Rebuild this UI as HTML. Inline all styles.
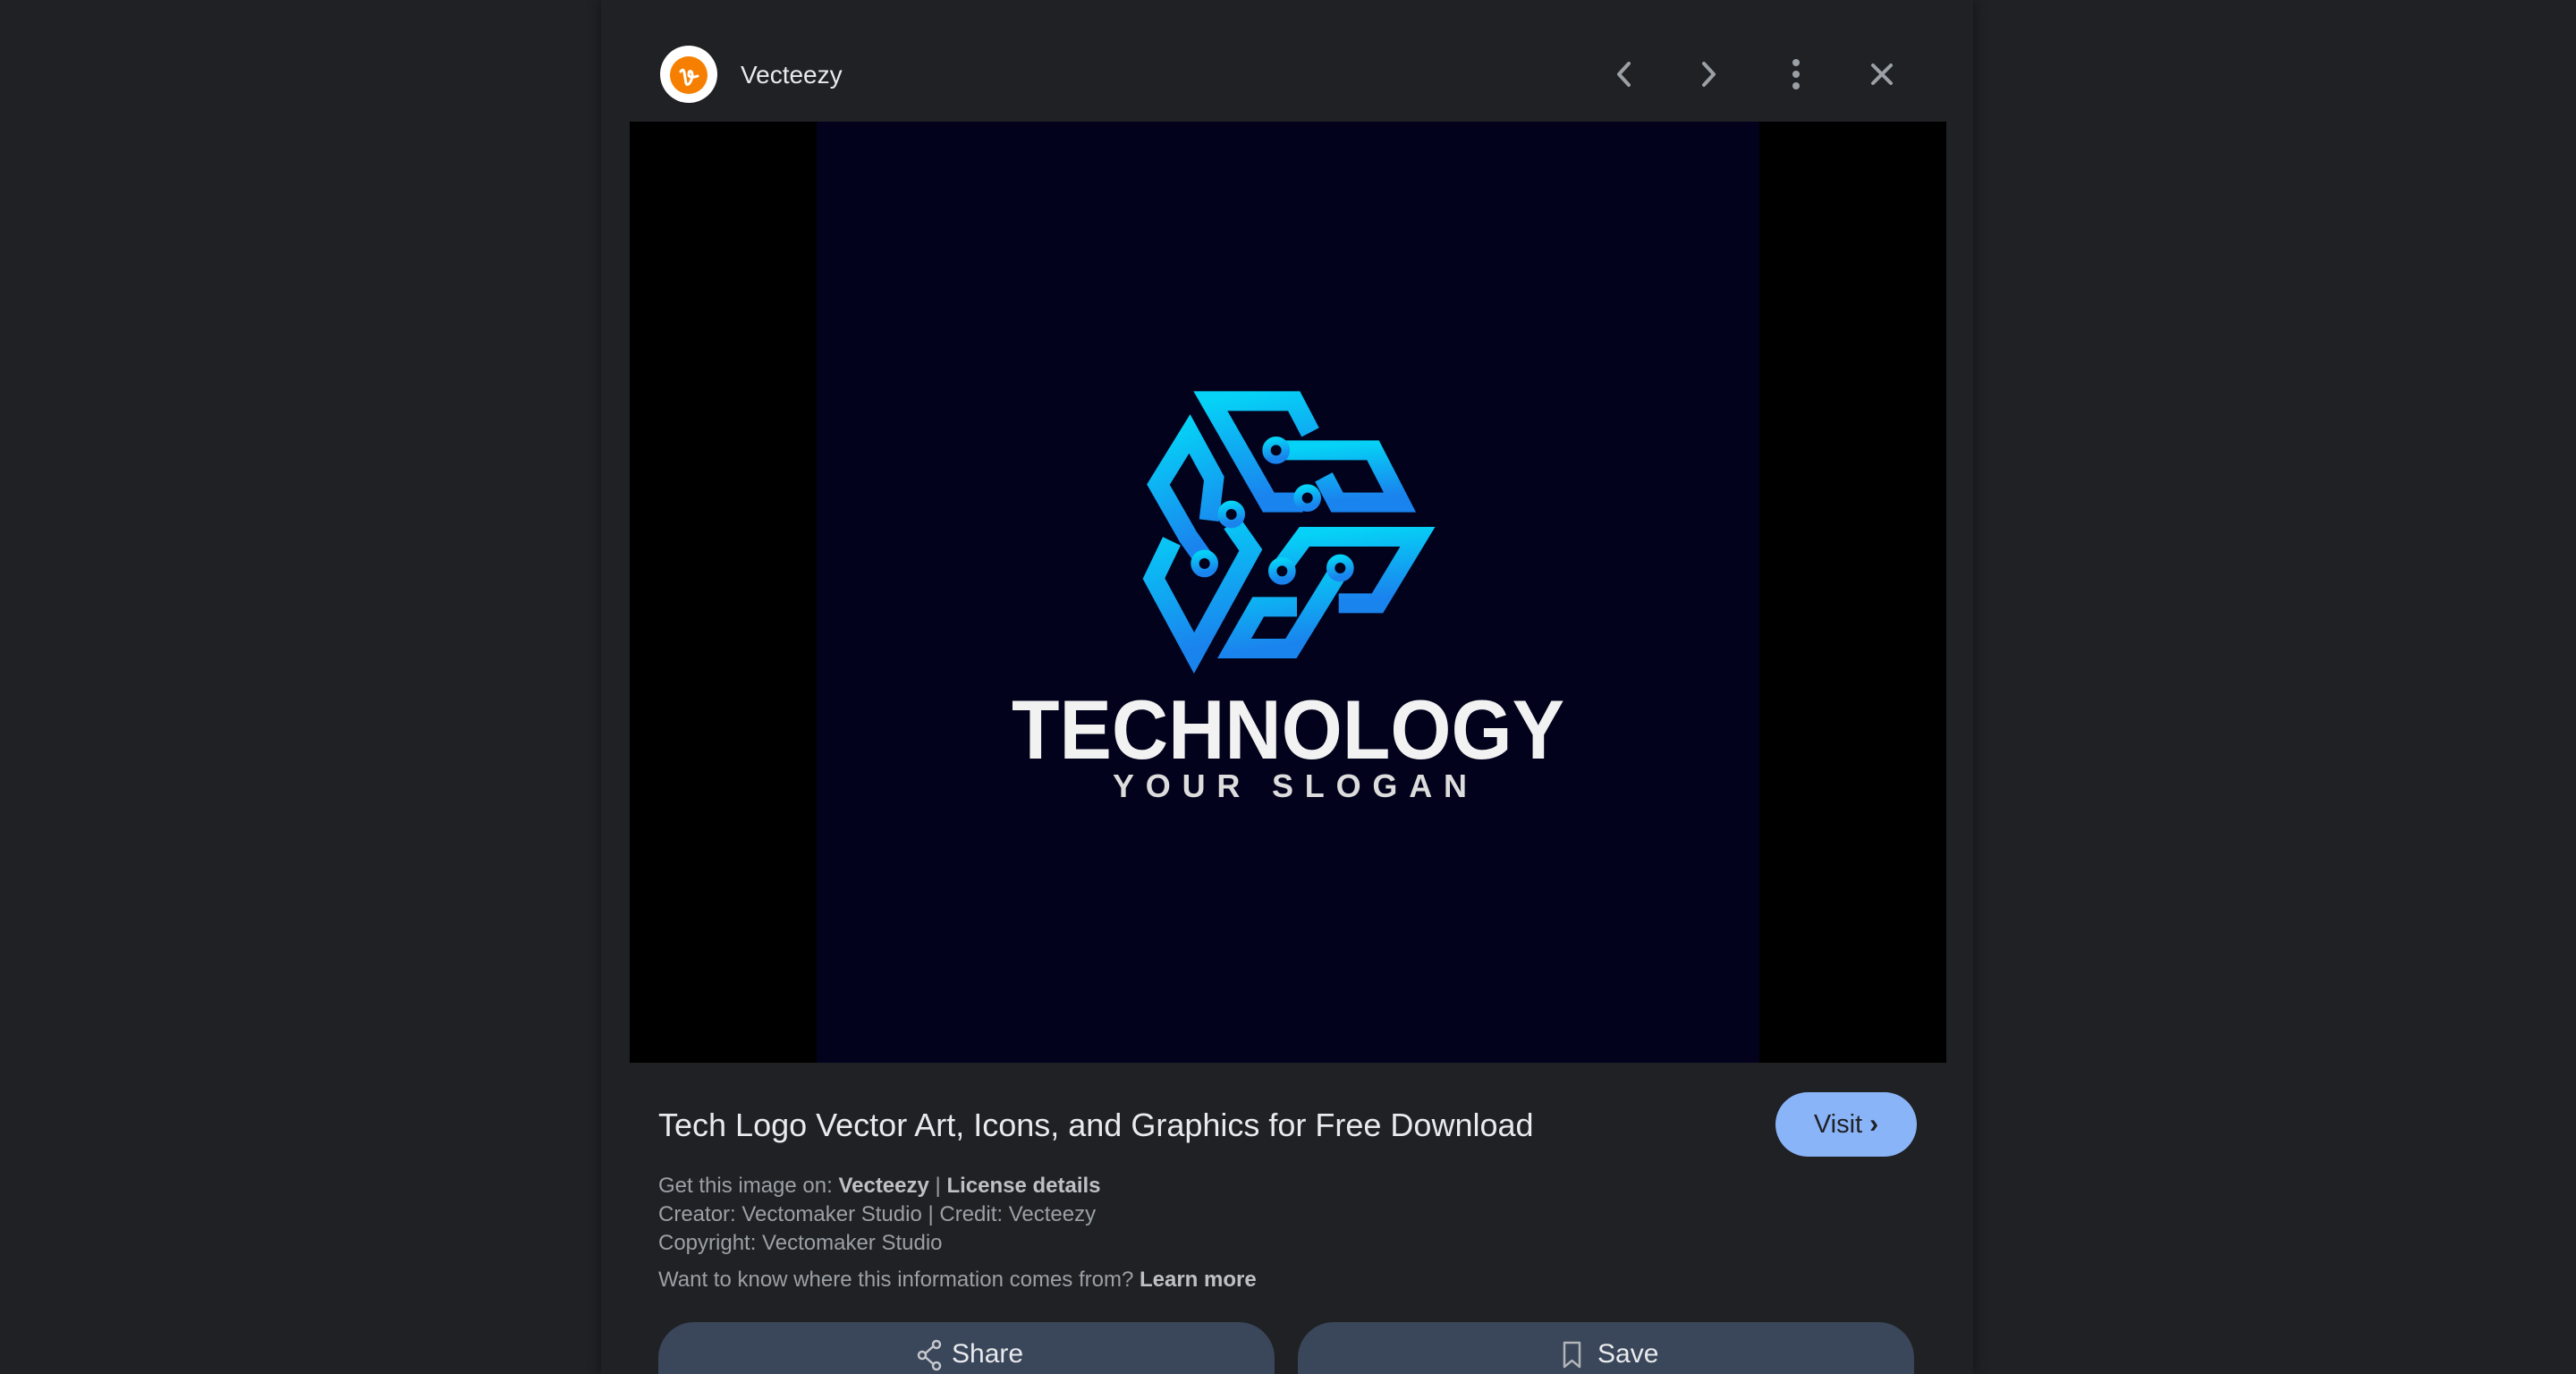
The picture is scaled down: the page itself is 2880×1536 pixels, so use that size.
<!DOCTYPE html>
<html><head><meta charset="utf-8"><style>
html,body{margin:0;padding:0;width:2880px;height:1536px;overflow:hidden;background:#202124;font-family:"Liberation Sans",Arial,sans-serif;position:relative;}
.panel{position:absolute;left:672px;top:0;width:1534px;height:1536px;background:#202124;box-shadow:0 0 14px rgba(0,0,0,.45);}
.abs{position:absolute;}
.img{left:704px;top:136px;width:1472px;height:1052px;background:#000;}
.navy{left:913px;top:136px;width:1054px;height:1052px;background:#02021c;}
.info{left:736px;font-size:24px;color:#9aa0a6;white-space:nowrap;}
.info b{color:#bdc1c6;}
.btn{top:1478px;height:58px;border-radius:40px 40px 0 0;background:#3a4659;}
</style></head><body>
<div class="panel"></div>
<div class="abs" style="left:738px;top:51px;width:64px;height:64px;border-radius:50%;background:#fff;"></div>
<div class="abs" style="left:749px;top:63px;width:42px;height:42px;border-radius:50%;background:#f77f00;"></div>
<svg class="abs" style="left:749px;top:63px" width="42" height="42" viewBox="0 0 42 42"><path d="M12 17 Q15 13 16 18 L18 30 Q19 33 22 30 Q27 22 24 17 Q21 15 21 21 Q22 25 31 22" fill="none" stroke="#fff" stroke-width="3" stroke-linecap="round"/></svg>
<div class="abs" style="left:828px;top:68px;font-size:28px;color:#e8eaed;">Vecteezy</div>
<svg class="abs" style="left:1790px;top:58px" width="340" height="50" viewBox="0 0 340 50">
<g fill="none" stroke="#9aa0a6" stroke-width="4" stroke-linecap="round" stroke-linejoin="round">
<path d="M31 13 L20 25 L31 37"/>
<path d="M115 13 L126 25 L115 37"/>
<path d="M304 15 L324 35 M324 15 L304 35"/>
</g>
<g fill="#9aa0a6"><circle cx="218" cy="12" r="4"/><circle cx="218" cy="25" r="4"/><circle cx="218" cy="38" r="4"/></g>
</svg>
<div class="abs img"></div>
<div class="abs navy"></div>
<svg class="abs" style="left:1270px;top:425px" width="340" height="330" viewBox="0 0 1020 990">
<defs><linearGradient id="g" x1="0" y1="0" x2="0.2" y2="1"><stop offset="0" stop-color="#05d2f6"/><stop offset="1" stop-color="#1a84ee"/></linearGradient></defs>
<g fill="none" stroke="url(#g)" stroke-width="66" stroke-linejoin="miter">
<path d="M585 175 L530 70 L250 70 L445 410 L560 410"/>
<path d="M500 235 L795 235 L885 410 L675 410 L630 325"/>
<path d="M245 470 L262 330 L180 180 L75 350 L175 525 L225 595"/>
<path d="M120 540 L60 665 L195 915 L385 570 L322 480"/>
<path d="M495 620 L565 525 L945 525 L810 748 L680 748"/>
<path d="M680 640 L520 900 L330 900 L410 760 L540 760"/>
</g>
<g fill="#02021c" stroke="url(#g)" stroke-width="28">
<circle cx="470" cy="235" r="32"/><circle cx="575" cy="395" r="32"/><circle cx="320" cy="450" r="32"/>
<circle cx="230" cy="615" r="32"/><circle cx="490" cy="640" r="32"/><circle cx="685" cy="630" r="32"/>
</g>
</svg>
<svg class="abs" style="left:913px;top:136px" width="1054" height="1052" viewBox="0 0 1054 1052">
<text x="218" y="712" font-family="Liberation Sans" font-weight="bold" font-size="94" fill="#f2f2f2" textLength="618" lengthAdjust="spacingAndGlyphs">TECHNOLOGY</text>
<text x="331" y="755" font-family="Liberation Sans" font-weight="bold" font-size="36" fill="#dcdcdc" textLength="396" lengthAdjust="spacing">YOUR SLOGAN</text>
</svg>
<div class="abs" style="left:736px;top:1237px;font-size:36px;color:#e8eaed;white-space:nowrap;">Tech Logo Vector Art, Icons, and Graphics for Free Download</div>
<div class="abs" style="left:1985px;top:1221px;width:158px;height:72px;border-radius:36px;background:#8ab4f8;color:#202124;font-size:29px;line-height:72px;text-align:center;">Visit <span style="font-size:30px;font-weight:bold">&#x203A;</span></div>
<div class="abs info" style="top:1312px;">Get this image on: <b>Vecteezy</b> | <b>License details</b></div>
<div class="abs info" style="top:1344px;">Creator: Vectomaker Studio | Credit: Vecteezy</div>
<div class="abs info" style="top:1376px;">Copyright: Vectomaker Studio</div>
<div class="abs info" style="top:1417px;">Want to know where this information comes from? <b>Learn more</b></div>
<div class="abs btn" style="left:736px;width:689px;"></div>
<div class="abs btn" style="left:1451px;width:689px;"></div>
<svg class="abs" style="left:1024px;top:1497px" width="32" height="36" viewBox="0 0 32 36"><g fill="none" stroke="#c4c7cc" stroke-width="2.5"><circle cx="23" cy="6" r="4"/><circle cx="7" cy="18" r="4"/><circle cx="23" cy="30" r="4"/><path d="M10.5 16 L19.5 8 M10.5 20 L19.5 28"/></g></svg>
<div class="abs" style="left:1064px;top:1497px;font-size:30px;color:#e8eaed;">Share</div>
<svg class="abs" style="left:1746px;top:1499px" width="24" height="32" viewBox="0 0 24 32"><path d="M3 2 H20 V29 L11.5 22 L3 29 Z" fill="none" stroke="#b0b3b8" stroke-width="2.5" stroke-linejoin="round"/></svg>
<div class="abs" style="left:1786px;top:1497px;font-size:30px;color:#e8eaed;">Save</div>
</body></html>
